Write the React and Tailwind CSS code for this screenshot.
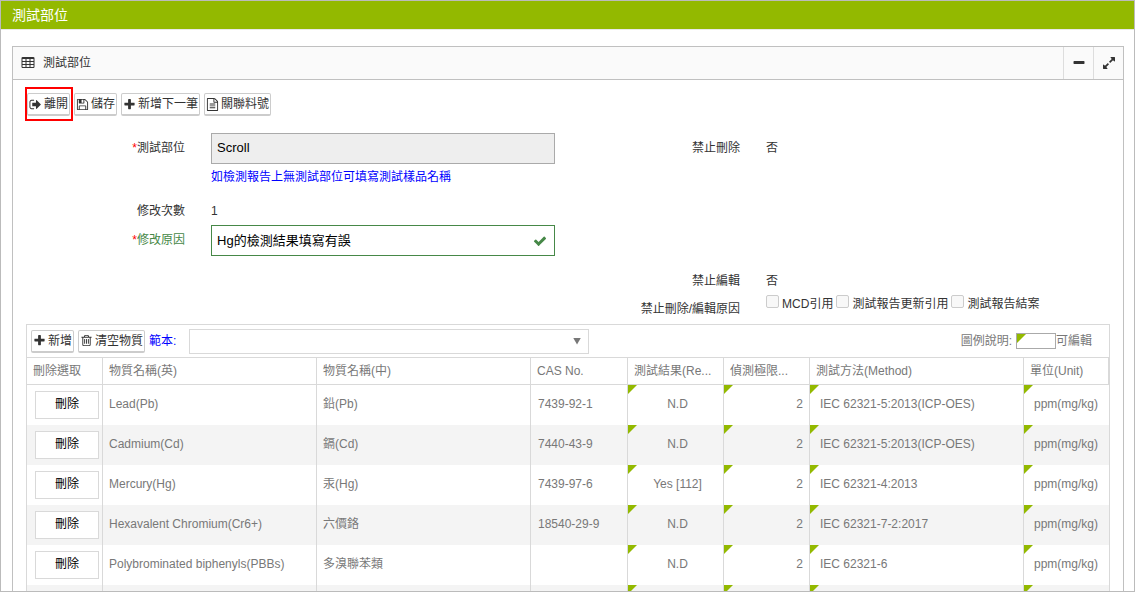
import React from 'react';

const CELL_DONE = 'q0 14-9 23t-23 9h-320q-14 0-23-9t-9-23v-192q0-14 9-23t23-9h320q14 0 23 9t9 23z';
const tableCells = [64, 576, 1088]
  .flatMap((x) => [416, 800, 1184].map((y) => `M${x + 512} ${y + 192}${CELL_DONE}`))
  .join('');

const PATHS = {
  plus: 'M1600 736v192q0 40-28 68t-68 28h-416v416q0 40-28 68t-68 28h-192q-40 0-68-28t-28-68v-416h-416q-40 0-68-28t-28-68v-192q0-40 28-68t68-28h416v-416q0-40 28-68t68-28h192q40 0 68 28t28 68v416h416q40 0 68 28t28 68z',
  minus: 'M1600 736v192q0 40-28 68t-68 28h-1216q-40 0-68-28t-28-68v-192q0-40 28-68t68-28h1216q40 0 68 28t28 68z',
  check: 'M1671 566q0 40-28 68l-724 724-136 136q-28 28-68 28t-68-28l-136-136-362-362q-28-28-28-68t28-68l136-136q28-28 68-28t68 28l294 295 656-657q28-28 68-28t68 28l136 136q28 28 28 68z',
  signOut: 'M704 1440q0 4 1 20t.5 26.5-3 23.5-10 19.5-20.5 6.5h-320q-119 0-203.5-84.5t-84.5-203.5v-704q0-119 84.5-203.5t203.5-84.5h320q13 0 22.5 9.5t9.5 22.5q0 4 1 20t.5 26.5-3 23.5-10 19.5-20.5 6.5h-320q-66 0-113 47t-47 113v704q0 66 47 113t113 47h312l11.5 1 11.5 3 8 5.5 7 9 2 13.5zm928-544q0 26-19 45l-544 544q-19 19-45 19t-45-19-19-45v-288h-448q-26 0-45-19t-19-45v-384q0-26 19-45t45-19h448v-288q0-26 19-45t45-19 45 19l544 544q19 19 19 45z',
  table: `${tableCells}M1728 288v1088q0 66-47 113t-113 47h-1344q-66 0-113-47t-47-113v-1088q0-66 47-113t113-47h1344q66 0 113 47t47 113z`,
  expand: 'M883 1056q0 13-10 23l-332 332 144 144q19 19 19 45t-19 45-45 19h-448q-26 0-45-19t-19-45v-448q0-26 19-45t45-19 45 19l144 144 332-332q10-10 23-10t23 10l114 114q10 10 10 23zm781-864v448q0 26-19 45t-45 19-45-19l-144-144-332 332q-10 10-23 10t-23-10l-114-114q-10-10-10-23t10-23l332-332-144-144q-19-19-19-45t19-45 45-19h448q26 0 45 19t19 45z',
  save: 'M512 1536h768v-384h-768v384zm896 0h128v-896q0-14-10-38.5t-20-34.5l-281-281q-10-10-34-20t-39-10v416q0 40-28 68t-68 28h-576q-40 0-68-28t-28-68v-416h-128v1280h128v-416q0-40 28-68t68-28h832q40 0 68 28t28 68v416zm-384-928v-320q0-13-9.5-22.5t-22.5-9.5h-192q-13 0-22.5 9.5t-9.5 22.5v320q0 13 9.5 22.5t22.5 9.5h192q13 0 22.5-9.5t9.5-22.5zm640 32v928q0 40-28 68t-68 28h-1344q-40 0-68-28t-28-68v-1344q0-40 28-68t68-28h928q40 0 88 20t76 48l280 280q28 28 48 76t20 88z',
  file: 'M1596 380q28 28 48 76t20 88v1152q0 40-28 68t-68 28h-1344q-40 0-68-28t-28-68v-1600q0-40 28-68t68-28h896q40 0 88 20t76 48zm-444-244v376h376q-10-29-22-41l-313-313q-12-12-41-22zm384 1528v-1024h-416q-40 0-68-28t-28-68v-416h-768v1536h1280zm-1024-864q0-14 9-23t23-9h704q14 0 23 9t9 23v64q0 14-9 23t-23 9h-704q-14 0-23-9t-9-23v-64zm736 224q14 0 23 9t9 23v64q0 14-9 23t-23 9h-704q-14 0-23-9t-9-23v-64q0-14 9-23t23-9h704zm0 256q14 0 23 9t9 23v64q0 14-9 23t-23 9h-704q-14 0-23-9t-9-23v-64q0-14 9-23t23-9h704z',
  trash: 'M704 736v576q0 14-9 23t-23 9h-64q-14 0-23-9t-9-23v-576q0-14 9-23t23-9h64q14 0 23 9t9 23zm256 0v576q0 14-9 23t-23 9h-64q-14 0-23-9t-9-23v-576q0-14 9-23t23-9h64q14 0 23 9t9 23zm256 0v576q0 14-9 23t-23 9h-64q-14 0-23-9t-9-23v-576q0-14 9-23t23-9h64q14 0 23 9t9 23zm128 724v-948h-896v948q0 22 7 40.5t14.5 27 10.5 8.5h832q3 0 10.5-8.5t14.5-27 7-40.5zm-672-1076h448l-48-117q-7-9-17-11h-317q-10 2-17 11zm928 32v64q0 14-9 23t-23 9h-96v948q0 83-47 143.5t-113 60.5h-832q-66 0-113-58.5t-47-141.5v-952h-96q-14 0-23-9t-9-23v-64q0-14 9-23t23-9h309l70-167q15-37 54-63t79-26h320q40 0 79 26t54 63l70 167h309q14 0 23 9t9 23z',
};

function Icon({ name, className = 'size-[13px]' }) {
  return (
    <svg viewBox="0 0 1792 1792" fill="currentColor" fillRule={name === 'table' ? 'evenodd' : 'nonzero'} className={`shrink-0 ${className}`} aria-hidden="true">
      <path d={PATHS[name]} />
    </svg>
  );
}

function ToolButton({ icon, children }) {
  return (
    <button type="button" className="flex h-[23px] items-center gap-[2px] whitespace-nowrap rounded-[2px] border border-b-2 border-[#ccc] bg-white px-px text-[#333]">
      <Icon name={icon} />
      {children}
    </button>
  );
}

function Corner() {
  return <span className="absolute left-0 top-0 size-[9px] bg-[#93b900] [clip-path:polygon(0_0,100%_0,0_100%)]" />;
}

function Field({ label, required, htmlFor, tone = 'text-[#333]', className = '', children }) {
  return (
    <div className={`flex gap-[26px] ${className}`}>
      <div className="w-[31%] shrink-0 whitespace-nowrap text-right leading-[30px]">
        {label && (
          <label htmlFor={htmlFor} className={tone}>
            {required && <span className="text-[#f00]">*</span>}
            {label}
          </label>
        )}
      </div>
      <div className="min-w-0 flex-1 pr-[13px] leading-[30px]">{children}</div>
    </div>
  );
}

const REASONS = ['MCD引用', '測試報告更新引用', '測試報告結案'];

const HEADS = ['刪除選取', '物質名稱(英)', '物質名稱(中)', 'CAS No.', '測試結果(Re...', '偵測極限...', '測試方法(Method)', '單位(Unit)'];

const ROWS = [
  ['Lead(Pb)', '鉛(Pb)', '7439-92-1', 'N.D', '2', 'IEC 62321-5:2013(ICP-OES)', 'ppm(mg/kg)'],
  ['Cadmium(Cd)', '鎘(Cd)', '7440-43-9', 'N.D', '2', 'IEC 62321-5:2013(ICP-OES)', 'ppm(mg/kg)'],
  ['Mercury(Hg)', '汞(Hg)', '7439-97-6', 'Yes [112]', '2', 'IEC 62321-4:2013', 'ppm(mg/kg)'],
  ['Hexavalent Chromium(Cr6+)', '六價鉻', '18540-29-9', 'N.D', '2', 'IEC 62321-7-2:2017', 'ppm(mg/kg)'],
  ['Polybrominated biphenyls(PBBs)', '多溴聯苯類', '', 'N.D', '2', 'IEC 62321-6', 'ppm(mg/kg)'],
  ['', '', '', '', '', '', ''],
];

const CELL_STYLES = [
  'pl-[6px]',
  'pl-[6px]',
  'pl-[7px]',
  'relative pl-1 text-center',
  'relative pr-[6px] text-right',
  'relative pl-[10px]',
  'relative pl-[10px]',
];

function SubstanceGrid() {
  return (
    <section className="ml-[13px] mr-[13px] border border-[#d9d9d9] text-[#787878]">
      <div className="flex h-8 items-center pl-1 pr-[17px]">
        <div className="flex gap-1">
          <ToolButton icon="plus">新增</ToolButton>
          <ToolButton icon="trash">清空物質</ToolButton>
        </div>
        <label htmlFor="template" className="ml-1 w-10 whitespace-nowrap text-[#00f]">範本:</label>
        <div className="relative w-[400px]">
          <select id="template" className="block h-[25px] w-full appearance-none border border-[#d9d9d9] bg-white px-2">
            <option value=""></option>
          </select>
          <span className="pointer-events-none absolute right-2 top-[9px] h-[7px] w-2 bg-[#777] [clip-path:polygon(0_0,100%_0,50%_100%)]" />
        </div>
        <div className="ml-auto flex items-center whitespace-nowrap">
          圖例說明:
          <span className="relative ml-1 h-4 w-10 border border-[#aaa]">
            <Corner />
          </span>
          可編輯
        </div>
      </div>
      <table className="w-full table-fixed border-separate border-spacing-0">
        <colgroup>
          <col className="w-[75px]" />
          <col className="w-[214px]" />
          <col className="w-[214px]" />
          <col className="w-[97px]" />
          <col className="w-[96px]" />
          <col className="w-[86px]" />
          <col className="w-[214px]" />
          <col />
        </colgroup>
        <thead>
          <tr>
            {HEADS.map((h) => (
              <th key={h} scope="col" className="h-7 whitespace-nowrap border-y border-l border-[#d9d9d9] pl-[6px] text-left font-normal first:border-l-0 last:border-r">
                {h}
              </th>
            ))}
          </tr>
        </thead>
        <tbody>
          {ROWS.map((row, r) => (
            <tr key={r} className="even:bg-[#f4f4f4]">
              <td className="h-10 p-0 pl-2">
                {row[0] && (
                  <button type="button" className="block h-7 w-16 border border-[#d9d9d9] bg-white pb-[2px] text-black">刪除</button>
                )}
              </td>
              {row.map((text, c) => (
                <td key={c} className={`h-10 whitespace-nowrap border-l border-[#d9d9d9] pb-[2px] ${CELL_STYLES[c]}`}>
                  {c > 2 && <Corner />}
                  {text}
                </td>
              ))}
            </tr>
          ))}
        </tbody>
      </table>
    </section>
  );
}

export default function App() {
  return (
    <div className="h-screen overflow-hidden border border-[#bbb] bg-white font-['Liberation_Sans','Noto_Sans_CJK_TC',sans-serif] text-xs text-[#333]">
      <header className="border-b border-[#e8e8e8] bg-[#93b900] bg-clip-padding px-[11px]">
        <h1 className="text-sm leading-7 text-white">測試部位</h1>
      </header>
      <main className="ml-[11px] mr-[10px] mt-4 border border-[#c0c0c0]">
        <div className="flex h-8 items-stretch bg-[#fafafa]">
          <h2 className="flex flex-1 items-center gap-2 pl-2">
            <Icon name="table" className="size-[14px]" />
            <span className="leading-8">測試部位</span>
          </h2>
          <button type="button" aria-label="縮小" className="flex w-[30px] items-center justify-center border-l border-[#ddd]">
            <Icon name="minus" className="size-[14px]" />
          </button>
          <button type="button" aria-label="展開" className="flex w-[30px] items-center justify-center border-l border-[#ddd]">
            <Icon name="expand" className="size-[14px]" />
          </button>
        </div>
        <div className="border-t border-[#c0c0c0] pt-[13px]">
          <div className="flex gap-1 pl-[14px]">
            <div className="relative">
              <ToolButton icon="signOut">離開</ToolButton>
              <span className="pointer-events-none absolute -bottom-[5px] -left-[2px] -right-[3px] -top-[6px] border-2 border-[#f00]" />
            </div>
            <ToolButton icon="save">儲存</ToolButton>
            <ToolButton icon="plus">新增下一筆</ToolButton>
            <ToolButton icon="file">關聯料號</ToolButton>
          </div>
          <form className="mt-[17px] grid grid-cols-2">
            <Field label="測試部位" required htmlFor="part">
              <input id="part" readOnly defaultValue="Scroll" className="block h-[31px] w-full border border-[#aaa] bg-[#eee] px-[5px] pb-[2px] text-[13px] text-black" />
              <p className="h-8 leading-[26px] text-[#00f]">如檢測報告上無測試部位可填寫測試樣品名稱</p>
            </Field>
            <Field label="禁止刪除">否</Field>
            <Field label="修改次數" className="col-start-1 h-[29px]">1</Field>
            <Field label="修改原因" required htmlFor="reason" tone="text-[#468847]" className="col-start-1 h-[41px]">
              <div className="relative">
                <input id="reason" defaultValue="Hg的檢測結果填寫有誤" className="block h-[31px] w-full border border-[#468847] bg-white pb-[2px] pl-[5px] pr-8 text-[13px] text-black" />
                <Icon name="check" className="absolute right-2 top-[9px] size-[14px] text-[#468847]" />
              </div>
            </Field>
            <Field label="禁止編輯" className="col-start-2 row-start-4 h-7">否</Field>
            <Field label="禁止刪除/編輯原因" className="col-start-2 row-start-5 h-[30px]">
              <div className="flex gap-[3px] whitespace-nowrap leading-5">
                {REASONS.map((reason) => (
                  <label key={reason} className="flex gap-[3px]">
                    <input type="checkbox" disabled className="mt-px size-[13px] appearance-none rounded-[2px] border border-[#ccc] bg-[#f8f8f8]" />
                    {reason}
                  </label>
                ))}
              </div>
            </Field>
          </form>
          <SubstanceGrid />
        </div>
      </main>
    </div>
  );
}
